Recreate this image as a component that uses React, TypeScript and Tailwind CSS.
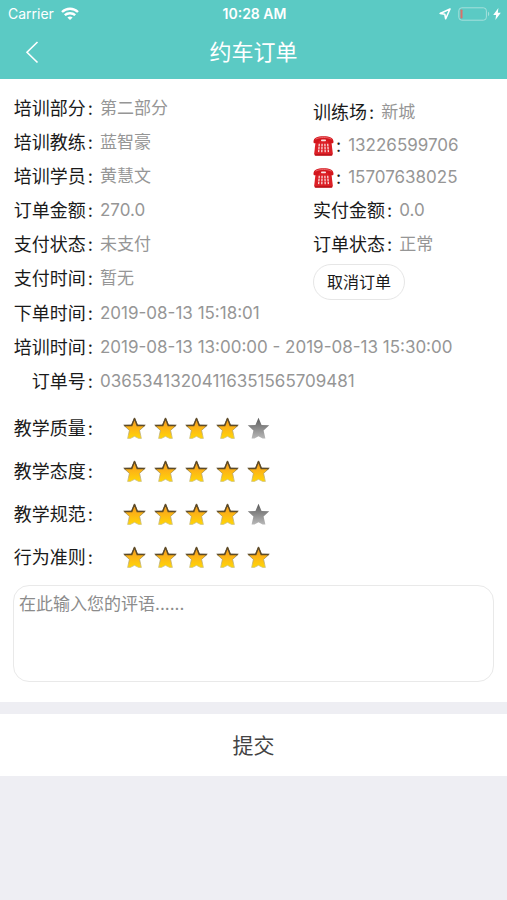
import { useState } from "react";
import type { ReactNode } from "react";

function WifiIcon() {
  return (
    <svg className="h-[14px] w-[18px]" viewBox="0 0 18 14" fill="none" stroke="white" strokeWidth="2.4">
      <path d="M1 5C5.6.6 12.4.6 17 5" />
      <path d="M3.800 8.200c2.900-2.700 7.500-2.700 10.400 0" />
      <path d="M6.400 10.400c1.500-1.300 3.700-1.300 5.200 0L9 13z" fill="white" stroke="none" />
    </svg>
  );
}

function LocationIcon() {
  return (
    <svg className="h-3 w-3" viewBox="0 0 12 12" fill="none" stroke="white" strokeWidth="1.6" strokeLinejoin="round">
      <path d="M11 1 1.200 5.400l4.600.8.900 4.600z" />
    </svg>
  );
}

function BatteryIcon() {
  return (
    <svg className="h-[14px] w-8" viewBox="0 0 32 14" fill="none">
      <rect x=".8" y=".8" width="27.600" height="12.400" rx="3" stroke="#a5e0dc" strokeWidth="1" />
      <rect x="2.500" y="2.500" width="2" height="9" rx=".8" fill="#d9706a" />
      <path d="M30 4.800c1.600.6 1.600 3.800 0 4.400z" fill="#a5e0dc" />
    </svg>
  );
}

function BoltIcon() {
  return (
    <svg className="h-3 w-2" viewBox="0 0 8 12" fill="white">
      <path d="M5.400 0 .2 6.900h2.900L2.400 12l5.400-7.300H4.800z" />
    </svg>
  );
}

function PhoneIcon() {
  return (
    <svg className="h-5 w-[21px]" viewBox="0 0 21 20">
      <path d="M2.800 4h15.400l1.600 13.500q.1 2.200-1.600 2.200H2.800q-1.700 0-1.600-2.200z" fill="#dc1f26" />
      <path d="M.5 5.500C.8 1.800 4 .3 10.500.3s9.700 1.500 10 5.200c.1 1.300-.4 1.800-1.500 1.800h-2.200c-1.100 0-1.600-.6-1.600-1.600V5H5.800v.7c0 1-.5 1.600-1.600 1.600H2C.9 7.300.4 6.800.5 5.500z" fill="#d3161d" />
      <path d="M2.500 3.200c3.500-2.300 12.500-2.300 16 0" stroke="#ee6468" strokeWidth="1" fill="none" />
      <rect x="8" y="3.600" width="5" height="1.700" rx=".8" fill="#fbe3e3" />
      <path d="M6.300 7.800 5.600 16.300M9.100 7.800 8.800 16.300M11.900 7.800l.3 8.500M14.700 7.800l.7 8.500" stroke="#fbdcdc" strokeWidth="1.300" strokeDasharray="2.400 .6" />
      <path d="M2 18.900h17" stroke="#a90f16" strokeWidth="1" />
    </svg>
  );
}

function StarIcon({ filled }: { filled: boolean }) {
  const outline =
    "M12 .9 15.200 8.300 23.200 8.500 17.300 14 19.200 22.400 16.300 22.400 12 20.200 7.700 22.400 4.800 22.400 6.700 14 .8 8.500 8.800 8.300z";
  return (
    <svg className="h-[23px] w-[23px]" viewBox="0 0 24 24">
      <defs>
        <linearGradient id="gold" x1="0" y1="0" x2="0" y2="1">
          <stop offset="0" stopColor="#f0941f" />
          <stop offset=".5" stopColor="#fdb515" />
          <stop offset="1" stopColor="#ffd608" />
        </linearGradient>
        <linearGradient id="gray" x1="0" y1="0" x2="0" y2="1">
          <stop offset="0" stopColor="#5c5c5c" />
          <stop offset="1" stopColor="#b8b8b8" />
        </linearGradient>
        <linearGradient id="edge" x1="0" y1="0" x2="0" y2="1">
          <stop offset=".35" stopColor="#55462b" />
          <stop offset=".5" stopColor="#a0925f" />
          <stop offset="1" stopColor="#cfc48a" />
        </linearGradient>
      </defs>
      {filled ? (
        <>
          <path d={outline} fill="url(#gold)" stroke="url(#edge)" strokeWidth=".8" />
          <path d="M12 1.500 9.200 8.900 1.500 9.100M12 1.500l2.800 7.400 7.700.2" fill="none" stroke="#5c4a28" strokeWidth="1.300" />
        </>
      ) : (
        <path d={outline} fill="url(#gray)" />
      )}
    </svg>
  );
}

function Colon() {
  return <span className="ml-[2px]">:</span>;
}

function Rating({ label, initial }: { label: string; initial: number }) {
  const [score, setScore] = useState(initial);
  return (
    <div role="group" aria-label={label} className="flex h-[43px] items-center">
      <span className="flex w-20 justify-end text-lg">
        {label}
        <Colon />
      </span>
      <div className="ml-[30px] flex gap-2">
        {[1, 2, 3, 4, 5].map((n) => (
          <button key={n} type="button" aria-label={`${label} ${n}`} aria-pressed={n <= score} onClick={() => setScore(n)}>
            <StarIcon filled={n <= score} />
          </button>
        ))}
      </div>
    </div>
  );
}

function Field({ label, children }: { label: string; children: ReactNode }) {
  return (
    <div className="flex h-[34px] items-center gap-[7px] whitespace-nowrap">
      <dt className="flex w-20 justify-end text-lg">
        {label}
        <Colon />
      </dt>
      <dd className="text-[17px] text-[#969696]">{children}</dd>
    </div>
  );
}

function SideField({ label, children }: { label: string; children: ReactNode }) {
  return (
    <div className="flex h-[34px] items-center gap-[7px] whitespace-nowrap">
      <dt className="flex text-lg">
        {label}
        <Colon />
      </dt>
      <dd className="text-[17px] text-[#969696]">{children}</dd>
    </div>
  );
}

function PhoneField({ number }: { number: string }) {
  return (
    <div className="flex h-8 items-center gap-[7px] whitespace-nowrap">
      <dt className="flex items-center text-lg">
        <PhoneIcon />
        <Colon />
      </dt>
      <dd className="text-[17px] text-[#969696]">{number}</dd>
    </div>
  );
}

export default function App() {
  return (
    <div className="min-h-screen bg-[#eeeef3] font-['Inter','Noto_Sans_CJK_SC',sans-serif] text-[#1a1a1a]">
      <header className="bg-[#5bcac4] text-white">
        <div className="grid h-7 grid-cols-3 items-center pr-[6px] pl-2 text-sm">
          <div className="flex items-center gap-[7px]">
            Carrier
            <WifiIcon />
          </div>
          <div className="text-center font-semibold">10:28 AM</div>
          <div className="flex items-center justify-end">
            <LocationIcon />
            <div className="ml-[7px] flex items-center gap-[3px]">
              <BatteryIcon />
              <BoltIcon />
            </div>
          </div>
        </div>
        <div className="grid h-[51px] grid-cols-3 items-center px-6 pb-[3px]">
          <button type="button" aria-label="返回" className="justify-self-start">
            <svg className="h-6 w-4" viewBox="0 0 16 24" fill="none" stroke="white" strokeWidth="1.600">
              <path d="M13.500 2 3 12.200 13.500 22.500" />
            </svg>
          </button>
          <h1 className="text-center text-[22px]">约车订单</h1>
        </div>
      </header>

      <form onSubmit={(e) => e.preventDefault()}>
        <section className="bg-white px-[13px] pt-[13px] pb-5">
          <div className="-mb-[3px] flex">
            <dl className="w-[300px]">
              <Field label="培训部分">第二部分</Field>
              <Field label="培训教练">蓝智豪</Field>
              <Field label="培训学员">黄慧文</Field>
              <Field label="订单金额">270.0</Field>
              <Field label="支付状态">未支付</Field>
              <Field label="支付时间">暂无</Field>
            </dl>
            <div className="pt-1">
              <dl>
                <SideField label="训练场">新城</SideField>
                <PhoneField number="13226599706" />
                <PhoneField number="15707638025" />
                <SideField label="实付金额">0.0</SideField>
                <SideField label="订单状态">正常</SideField>
              </dl>
              <button type="button" className="mt-[2px] h-9 w-[92px] rounded-full border border-[#e6e6e6] text-base">
                取消订单
              </button>
            </div>
          </div>
          <dl>
            <Field label="下单时间">2019-08-13 15:18:01</Field>
            <Field label="培训时间">2019-08-13 13:00:00 - 2019-08-13 15:30:00</Field>
            <Field label="订单号">03653413204116351565709481</Field>
          </dl>
          <div className="mt-2">
            <Rating label="教学质量" initial={4} />
            <Rating label="教学态度" initial={5} />
            <Rating label="教学规范" initial={4} />
            <Rating label="行为准则" initial={5} />
          </div>
          <textarea
            aria-label="评语"
            placeholder="在此输入您的评语......"
            className="mt-[6px] block h-[97px] w-full resize-none rounded-2xl border border-[#e9e9e9] px-[5px] py-[6px] text-[17px] placeholder:text-[#8c8c8c]"
          />
        </section>
        <button type="submit" className="mt-3 block h-[62px] w-full bg-white pt-[2px] text-[21px] text-[#444]">
          提交
        </button>
      </form>
    </div>
  );
}
